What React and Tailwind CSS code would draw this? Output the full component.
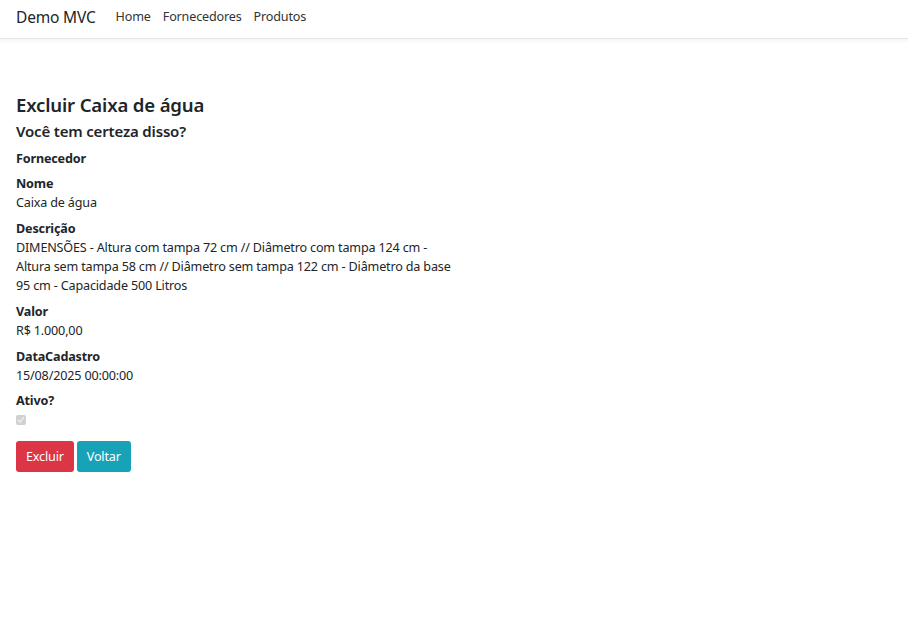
import React from 'react';

const fields = [
  { label: 'Fornecedor', value: '' },
  { label: 'Nome', value: 'Caixa de água' },
  {
    label: 'Descrição',
    value:
      'DIMENSÕES - Altura com tampa 72 cm // Diâmetro com tampa 124 cm - Altura sem tampa 58 cm // Diâmetro sem tampa 122 cm - Diâmetro da base 95 cm - Capacidade 500 Litros',
  },
  { label: 'Valor', value: 'R$ 1.000,00' },
  { label: 'DataCadastro', value: '15/08/2025 00:00:00' },
];

const App = () => {
  return (
    <div className="min-h-[617px] bg-white text-[#212529] font-['Noto_Sans',sans-serif] text-[12.6px] leading-[19px] tracking-[-0.17px]">
      {/* Navbar */}
      <nav className="h-[39px] flex items-start pt-[7px] px-4 border-b border-[#e5e5e5] shadow-[0_2px_4px_rgba(0,0,0,0.05)]">
        <span className="text-[15.5px] leading-[20px] text-[#212529] mr-[20px]">Demo MVC</span>
        <div className="flex gap-[12px] text-[12.6px] leading-[20px] text-[#333]">
          <a href="#">Home</a>
          <a href="#">Fornecedores</a>
          <a href="#">Produtos</a>
        </div>
      </nav>

      <main className="px-4 pt-[54px]">
        <h1 className="text-[18.6px] font-semibold leading-[23px] mb-[6px]">Excluir Caixa de água</h1>
        <h3 className="text-[15px] font-semibold leading-[19px] mb-[8px]">Você tem certeza disso?</h3>

        <dl className="max-w-[440px]">
          {fields.map(f => (
            <div key={f.label} className="mb-[6.3px]">
              <dt className="font-bold">{f.label}</dt>
              {f.value && <dd className="leading-[19.3px]">{f.value}</dd>}
            </div>
          ))}
          <div>
            <dt className="font-bold">Ativo?</dt>
            <dd className="h-[19px] flex items-center">
              <input type="checkbox" checked disabled readOnly className="w-[10px] h-[10px] accent-[#ccc]" />
            </dd>
          </div>
        </dl>

        <form className="mt-[12px] flex gap-[3px]">
          <button type="button" className="h-[31px] px-[10px] rounded-[3px] bg-[#dc3545] text-white">
            Excluir
          </button>
          <button type="button" className="h-[31px] px-[10px] rounded-[3px] bg-[#17a2b8] text-white">
            Voltar
          </button>
        </form>
      </main>
    </div>
  );
};

export default App;
